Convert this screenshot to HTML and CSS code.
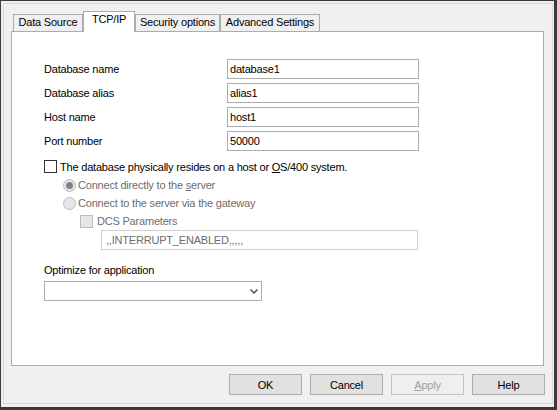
FILE: index.html
```html
<!DOCTYPE html>
<html>
<head>
<meta charset="utf-8">
<link rel="stylesheet" href="styles.css">
</head>
<body>
<div class="window">
  <div class="frame">
    <div class="tabstrip">
      <div class="tab t1">Data Source</div>
      <div class="tab sel t2">TCP/IP</div>
      <div class="tab t3">Security options</div>
      <div class="tab t4">Advanced Settings</div>
    </div>
    <div class="panel">
      <div class="fields">
        <div class="label">Database name</div><div class="edit">database1</div>
        <div class="label">Database alias</div><div class="edit">alias1</div>
        <div class="label">Host name</div><div class="edit">host1</div>
        <div class="label">Port number</div><div class="edit">50000</div>
      </div>
      <div class="options">
        <div class="row r1"><span class="check"></span><span>The database physically resides on a host or <u>O</u>S/400 system.</span></div>
        <div class="row r2 dis"><span class="radio on"></span><span>Connect directly to the <u>s</u>erver</span></div>
        <div class="row r3 dis"><span class="radio"></span><span>Connect to the server via the <u>g</u>ateway</span></div>
        <div class="row r4 dis"><span class="check dcheck"></span><span>DCS Parameters</span></div>
        <div class="dcsfield">,,INTERRUPT_ENABLED,,,,,</div>
      </div>
      <div class="optlabel">Optimize for application</div>
      <div class="select">
        <svg width="8" height="5" viewBox="0 0 8 5"><polyline points="0.5,0.5 4,4 7.5,0.5" fill="none" stroke="#4a4a4a" stroke-width="1.4"/></svg>
      </div>
    </div>
    <div class="buttons">
      <div class="btn">OK</div>
      <div class="btn">Cancel</div>
      <div class="btn disabled"><u>A</u>pply</div>
      <div class="btn">Help</div>
    </div>
  </div>
</div>
</body>
</html>
```

FILE: styles.css
```css
* { box-sizing: border-box; }
html, body { margin: 0; padding: 0; background: #f0f0f0; }
body {
  font-family: "Liberation Sans", Arial, sans-serif;
  font-size: 11px;
  letter-spacing: -0.2px;
  color: #000;
}
.window {
  width: 557px;
  height: 410px;
  background: #f0f0f0;
  border-style: solid;
  border-color: #3a3a3a;
  border-width: 1px 3px 3px 1px;
  padding: 2px 1px 3px 2px;
}
.frame {
  height: 100%;
  border: 1px solid #d8d8d8;
  padding: 7px 8px 0 7px;
}
.tabstrip {
  display: flex;
  align-items: flex-end;
  height: 20px;
  margin-left: 2px;
}
.tab {
  height: 17px;
  border: 1px solid #acacac;
  border-bottom: none;
  background: #f0f0f0;
  text-align: center;
  line-height: 13px;
  padding-top: 1px;
  white-space: nowrap;
}
.tab + .tab { margin-left: 0; }
.tab.sel {
  height: 21px;
  background: #fff;
  margin-bottom: -1px;
  position: relative;
  z-index: 1;
}
.t1 { width: 70px; }
.t2 { width: 52px; }
.t3 { width: 85px; margin-left: 0; }
.t4 { width: 100px; margin-left: 1px; }
.panel {
  width: 533px;
  height: 335px;
  background: #fff;
  border: 1px solid #acacac;
  padding: 27px 0 0 32px;
}
.fields {
  display: grid;
  grid-template-columns: 183px 192px;
  grid-auto-rows: 20px;
  row-gap: 4px;
}
.label {
  display: flex;
  align-items: center;
}
.edit {
  border: 1px solid #acacac;
  padding-left: 2px;
  display: flex;
  align-items: center;
}
.options { margin-top: 6px; }
.row {
  display: flex;
  align-items: center;
  height: 18px;
}
.row.r1 { height: 19px; }
.row.r2, .row.r3 { padding-left: 19px; }
.row.r4 { padding-left: 36px; }
.dis { color: #6d6d6d; }
.check {
  width: 13px;
  height: 13px;
  border: 1px solid #333;
  background: #fff;
  margin-right: 3px;
  flex: none;
}
.check.dcheck {
  border-color: #bcbcbc;
  background: #e6e6e6;
  margin-right: 4px;
}
.radio {
  width: 13px;
  height: 13px;
  border-radius: 50%;
  border: 1px solid #bcbcbc;
  background: #e6e6e6;
  margin-right: 2px;
  flex: none;
  display: flex;
  align-items: center;
  justify-content: center;
}
.radio.on::after {
  content: "";
  width: 7px;
  height: 7px;
  border-radius: 50%;
  background: #838383;
}
.dcsfield {
  margin-left: 57px;
  width: 317px;
  height: 20px;
  border: 1px solid #d0d0d0;
  color: #6d6d6d;
  padding-left: 4px;
  display: flex;
  align-items: center;
}
.optlabel {
  margin-top: 13px;
  line-height: 14px;
}
.select {
  margin-top: 4px;
  width: 218px;
  height: 20px;
  border: 1px solid #acacac;
  display: flex;
  align-items: center;
  justify-content: flex-end;
  padding-right: 3px;
}
.buttons {
  display: flex;
  justify-content: flex-end;
  gap: 8px;
  margin-top: 8px;
  margin-right: -1px;
}
.btn {
  width: 73px;
  height: 21px;
  border: 1px solid #adadad;
  background: #e1e1e1;
  display: flex;
  align-items: center;
  justify-content: center;
}
.btn.disabled {
  background: #efefef;
  border-color: #c4c4c4;
  color: #a0a0a0;
}
```
